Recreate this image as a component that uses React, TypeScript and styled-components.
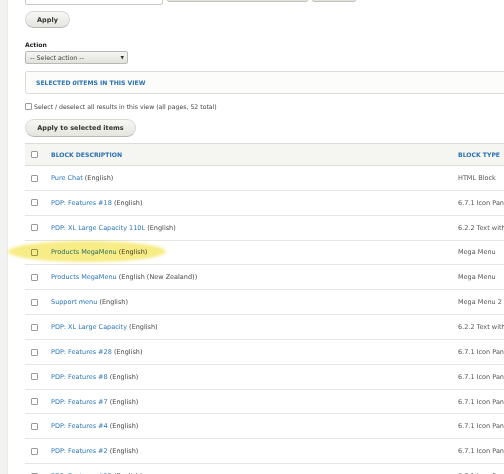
import React from "react";
import styled, { createGlobalStyle } from "styled-components";

const Global = createGlobalStyle`
  html, body { margin: 0; padding: 0; background: #fff; overflow: hidden; }
  body { font-family: "DejaVu Sans", Verdana, sans-serif; color: #333; }
`;

const Page = styled.div`
  display: flex;
  width: 504px;
  height: 474px;
  overflow: hidden;
  align-items: flex-start;
`;

const Sidebar = styled.div`
  flex: 0 0 8px;
  align-self: stretch;
  background: #f2f2f0;
  border-right: 1px solid #ebebe8;
  box-sizing: border-box;
`;

const Main = styled.div`
  flex: 0 0 auto;
  width: 700px;
  padding-left: 17px;
  display: flex;
  flex-direction: column;
  align-items: flex-start;
  & > * { flex-shrink: 0; }
`;

const TopRow = styled.div`
  display: flex;
  gap: 4px;
  margin-top: -15px;
  align-items: flex-start;
`;

const TextInput = styled.div`
  width: 138px;
  height: 20px;
  box-sizing: border-box;
  border: 1px solid #c9c9c4;
  border-radius: 2px;
  background: #fff;
`;

const GraySelect = styled.div<{ $w: number }>`
  width: ${(p) => p.$w}px;
  height: 17px;
  box-sizing: border-box;
  border: 1px solid #c2c2bc;
  border-radius: 2px;
  background: linear-gradient(#f3f3ef, #e4e4de);
`;

const Button = styled.button<{ $w: number; $h: number; $mt: number }>`
  margin-top: ${(p) => p.$mt}px;
  width: ${(p) => p.$w}px;
  height: ${(p) => p.$h}px;
  box-sizing: border-box;
  padding: 0;
  border: 1px solid #d8d8d2;
  border-bottom-color: #b8b8b2;
  border-radius: 10px;
  background: linear-gradient(#f7f7f4, #e5e5df);
  font-family: "DejaVu Sans", Verdana, sans-serif;
  font-weight: bold;
  font-size: 6.5px;
  color: #333;
  display: flex;
  align-items: center;
  justify-content: center;
`;

const Label = styled.div`
  margin-top: 13px;
  height: 8px;
  line-height: 8px;
  font-size: 6.1px;
  font-weight: bold;
  color: #222;
`;

const ActionSelect = styled.div`
  margin-top: 2px;
  width: 103px;
  height: 13px;
  box-sizing: border-box;
  border: 1px solid #b9b9b4;
  border-radius: 2px;
  background: linear-gradient(#f5f5f2, #e2e2dc);
  display: flex;
  align-items: center;
  justify-content: space-between;
  padding: 0 3px 0 4px;
  font-size: 6.3px;
  color: #444;
`;

const Arrow = styled.span`
  font-size: 4.5px;
  color: #333;
`;

const SelectedBox = styled.div`
  margin-top: 7px;
  width: 660px;
  height: 23px;
  box-sizing: border-box;
  border: 1px solid #dcdcd8;
  border-radius: 2px;
  background: #fcfcfa;
  display: flex;
  align-items: center;
  padding-left: 10px;
  font-size: 6.1px;
  font-weight: bold;
  color: #2a72b5;
  text-transform: uppercase;
  em { font-style: italic; }
`;

const SelectAll = styled.div`
  margin-top: 8px;
  height: 8px;
  display: flex;
  align-items: center;
  gap: 2px;
  font-size: 6.2px;
  color: #444;
`;

const Check = styled.span`
  display: inline-block;
  width: 5px;
  height: 5px;
  border: 1px solid #9a9a9a;
  border-radius: 1px;
  background: #fff;
  box-sizing: content-box;
  vertical-align: middle;
`;

const TableWrap = styled.div`
  position: relative;
  margin-top: 6px;
`;

const Table = styled.table`
  border-collapse: collapse;
  table-layout: fixed;
  width: 660px;
  font-size: 6.5px;
`;

const HeadCell = styled.th`
  height: 21px;
  padding: 0;
  background: #f5f5f2;
  border-top: 1px solid #dcdcd8;
  border-bottom: 1px solid #dcdcd8;
  text-align: left;
  font-size: 6.1px;
  font-weight: bold;
  color: #2a72b5;
  text-transform: uppercase;
  vertical-align: middle;
`;

const Cell = styled.td`
  height: 23.85px;
  padding: 0;
  border-bottom: 1px solid #e6e6e3;
  vertical-align: middle;
  color: #555;
  white-space: nowrap;
  overflow: hidden;
`;

const CheckCell = styled(Cell)`
  padding-left: 6px;
`;

const HeadCheckCell = styled(HeadCell)`
  padding-left: 6px;
`;

const Link = styled.a`
  color: #2b77bb;
  text-decoration: none;
`;

const Lang = styled.span`
  color: #474747;
`;

const Highlight = styled.div`
  position: absolute;
  left: -17px;
  top: 98px;
  width: 158px;
  height: 21px;
  border-radius: 50%;
  background: #f7ec86;
  mix-blend-mode: multiply;
  filter: blur(1.5px);
  pointer-events: none;
`;

type Row = { title: string; lang: string; type: string };

const rows: Row[] = [
  { title: "Pure Chat", lang: "(English)", type: "HTML Block" },
  { title: "PDP: Features #18", lang: "(English)", type: "6.7.1 Icon Panel" },
  { title: "PDP: XL Large Capacity 110L", lang: "(English)", type: "6.2.2 Text with Image" },
  { title: "Products MegaMenu", lang: "(English)", type: "Mega Menu" },
  { title: "Products MegaMenu", lang: "(English (New Zealand))", type: "Mega Menu" },
  { title: "Support menu", lang: "(English)", type: "Mega Menu 2" },
  { title: "PDP: XL Large Capacity", lang: "(English)", type: "6.2.2 Text with Image" },
  { title: "PDP: Features #28", lang: "(English)", type: "6.7.1 Icon Panel" },
  { title: "PDP: Features #8", lang: "(English)", type: "6.7.1 Icon Panel" },
  { title: "PDP: Features #7", lang: "(English)", type: "6.7.1 Icon Panel" },
  { title: "PDP: Features #4", lang: "(English)", type: "6.7.1 Icon Panel" },
  { title: "PDP: Features #2", lang: "(English)", type: "6.7.1 Icon Panel" },
  { title: "PDP: Features #32", lang: "(English)", type: "6.7.1 Icon Panel" },
];

export default function App() {
  return (
    <>
      <Global />
      <Page>
        <Sidebar />
        <Main>
          <TopRow>
            <TextInput />
            <GraySelect $w={141} />
            <GraySelect $w={44} />
          </TopRow>
          <Button $w={45} $h={17} $mt={6}>Apply</Button>
          <Label>Action</Label>
          <ActionSelect>
            <span>-- Select action --</span>
            <Arrow>▼</Arrow>
          </ActionSelect>
          <SelectedBox>
            Selected&nbsp;<em>0</em>items in this view
          </SelectedBox>
          <SelectAll>
            <Check />
            <span>Select / deselect all results in this view (all pages, 52 total)</span>
          </SelectAll>
          <Button $w={111} $h={18} $mt={9}>Apply to selected items</Button>
          <TableWrap>
            <Table>
              <colgroup>
                <col style={{ width: 26 }} />
                <col style={{ width: 407 }} />
                <col style={{ width: 227 }} />
              </colgroup>
              <thead>
                <tr>
                  <HeadCheckCell><Check /></HeadCheckCell>
                  <HeadCell>Block description</HeadCell>
                  <HeadCell>Block type</HeadCell>
                </tr>
              </thead>
              <tbody>
                {rows.map((r, i) => (
                  <tr key={i}>
                    <CheckCell><Check /></CheckCell>
                    <Cell>
                      <Link href="#">{r.title}</Link> <Lang>{r.lang}</Lang>
                    </Cell>
                    <Cell>{r.type}</Cell>
                  </tr>
                ))}
              </tbody>
            </Table>
            <Highlight />
          </TableWrap>
        </Main>
      </Page>
    </>
  );
}
